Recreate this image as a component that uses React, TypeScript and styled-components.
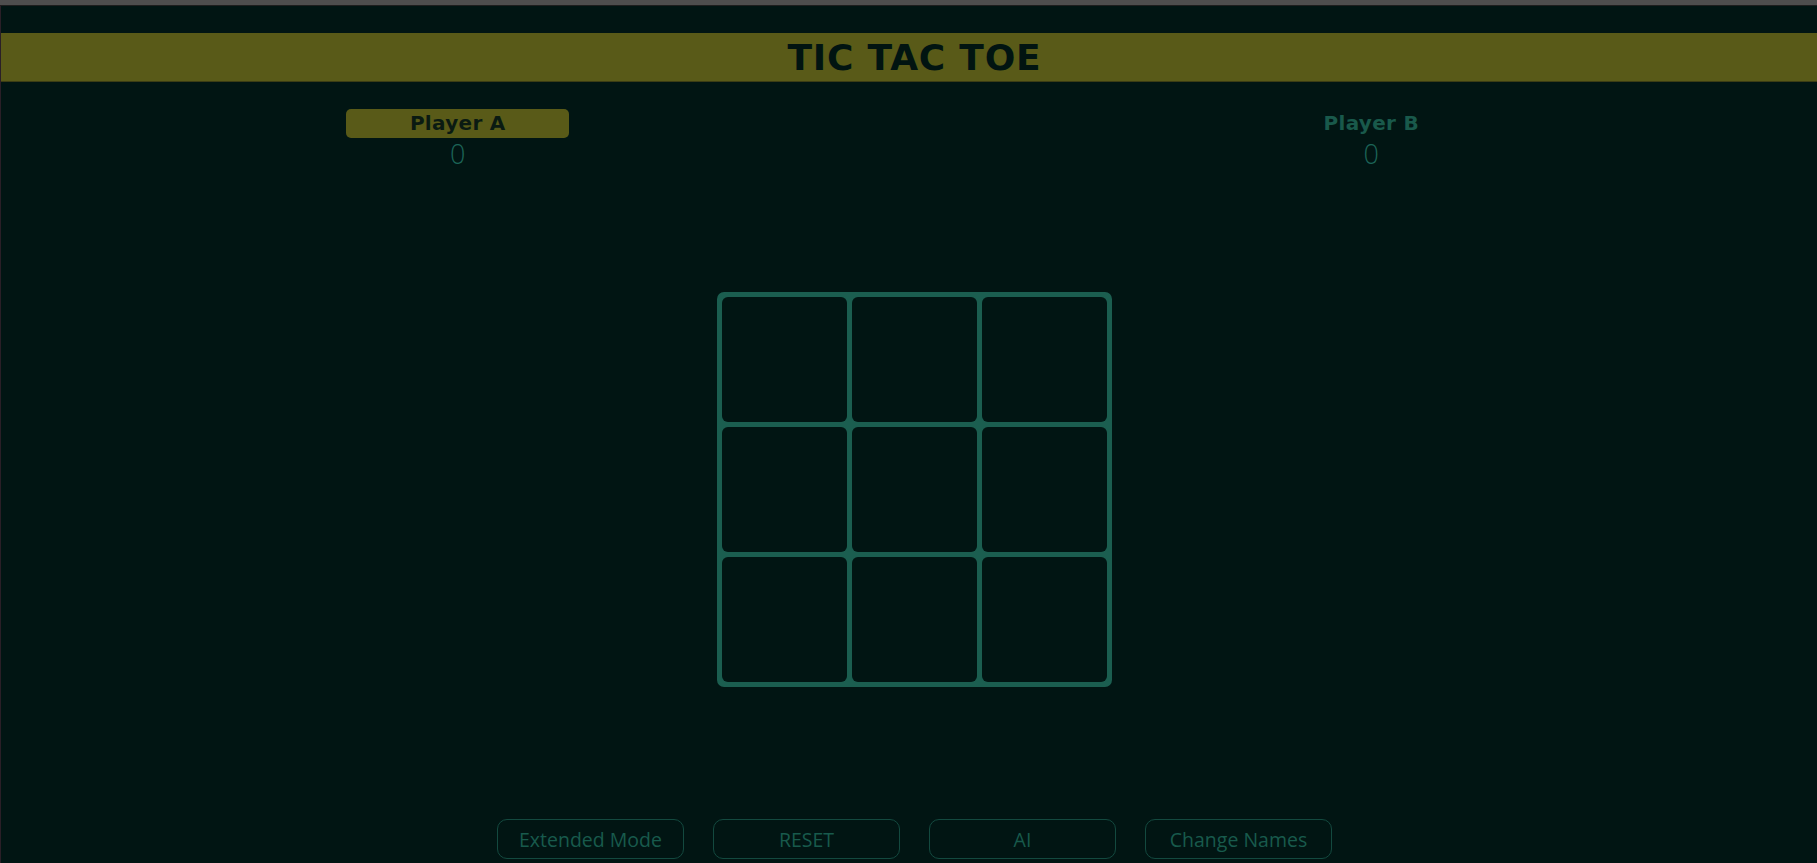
import React from "react";
import styled, { createGlobalStyle } from "styled-components";

const Global = createGlobalStyle`
  html, body {
    margin: 0;
    padding: 0;
    background: #011513;
    overflow: hidden;
  }
  body {
    font-family: "DejaVu Sans", sans-serif;
  }
  * { box-sizing: border-box; }
`;

const TopStrip = styled.div`
  height: 6px;
  background: #4e4e4e;
  border-bottom: 1px solid #1e1e1e;
`;

const Page = styled.div`
  width: 1828px;
  min-height: 857px;
  border-left: 1px solid #2a1f27;
  padding-top: 27px;
  display: flex;
  flex-direction: column;
  align-items: center;
`;

const Header = styled.h1`
  align-self: stretch;
  margin: 0;
  height: 49px;
  background: #595a18;
  color: #011411;
  font-family: "DejaVu Sans", sans-serif;
  font-weight: 700;
  font-size: 36px;
  line-height: 49px;
  text-align: center;
  letter-spacing: 0.8px;
  border-bottom: 1px solid #3c3d14;
`;

const Players = styled.div`
  align-self: stretch;
  margin-top: 27px;
  display: grid;
  grid-template-columns: 1fr 1fr;
`;

const PlayerCol = styled.div`
  display: flex;
  flex-direction: column;
  align-items: center;
`;

const PlayerName = styled.div<{ $active?: boolean }>`
  width: 223px;
  height: 29px;
  border-radius: 5px;
  background: ${(p) => (p.$active ? "#595a18" : "transparent")};
  color: ${(p) => (p.$active ? "#0a1a12" : "#19594b")};
  font-family: "DejaVu Sans", sans-serif;
  font-weight: 700;
  font-size: 20px;
  line-height: 29px;
  letter-spacing: 0.3px;
  text-align: center;
`;

const Score = styled.div`
  height: 30px;
  color: #1c6457;
  font-family: "Open Sans", sans-serif;
  font-weight: 300;
  font-size: 27px;
  line-height: 32px;
  text-align: center;
`;

const Board = styled.div`
  margin-top: 124px;
  display: grid;
  grid-template-columns: repeat(3, 125px);
  grid-template-rows: repeat(3, 125px);
  gap: 5px;
  padding: 5px;
  background: #1b5e50;
  border-radius: 7px;
`;

const Cell = styled.button`
  background: #011513;
  border: none;
  border-radius: 6px;
  padding: 0;
  margin: 0;
  cursor: pointer;
`;

const Controls = styled.div`
  margin-top: 132px;
  display: flex;
  gap: 29px;
`;

const ControlButton = styled.button`
  width: 187px;
  height: 40px;
  border: 1px solid #13493f;
  border-radius: 10px;
  background: transparent;
  color: #185a4c;
  font-family: "Open Sans", sans-serif;
  font-size: 19.5px;
  padding: 0;
  cursor: pointer;
`;

export default function App() {
  const cells = Array.from({ length: 9 });
  return (
    <>
      <Global />
      <TopStrip />
      <Page>
        <Header>TIC TAC TOE</Header>
        <Players>
          <PlayerCol>
            <PlayerName $active>Player A</PlayerName>
            <Score>0</Score>
          </PlayerCol>
          <PlayerCol>
            <PlayerName>Player B</PlayerName>
            <Score>0</Score>
          </PlayerCol>
        </Players>
        <Board>
          {cells.map((_, i) => (
            <Cell key={i} aria-label={`cell ${i + 1}`} />
          ))}
        </Board>
        <Controls>
          <ControlButton>Extended Mode</ControlButton>
          <ControlButton>RESET</ControlButton>
          <ControlButton>AI</ControlButton>
          <ControlButton>Change Names</ControlButton>
        </Controls>
      </Page>
    </>
  );
}
